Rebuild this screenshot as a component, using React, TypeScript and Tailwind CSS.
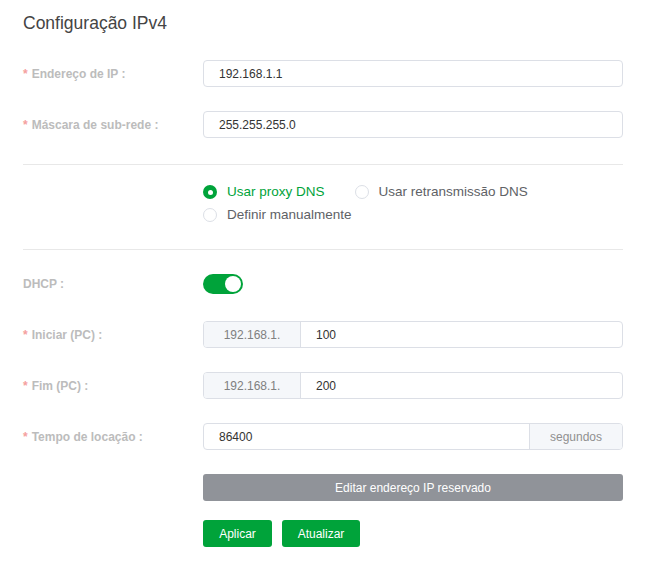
import React, { useState } from 'react';

const font = { fontFamily: '"Liberation Sans", Arial, sans-serif' };

const Label = ({ text, required = true }: { text: string; required?: boolean }) => (
  <div className="w-[180px] shrink-0 text-[12px] font-semibold text-[#bcbcbc]">
    {required && <span className="text-[#f5a0a0] mr-1">*</span>}
    {text}
  </div>
);

const Radio = ({ label, checked, onClick }: { label: string; checked: boolean; onClick: () => void }) => (
  <button type="button" onClick={onClick} className="flex items-center gap-[10px] text-[13.5px]">
    <span
      className={
        checked
          ? 'w-[14px] h-[14px] rounded-full bg-[#00a33a] flex items-center justify-center'
          : 'w-[14px] h-[14px] rounded-full border border-[#dcdfe6] bg-white'
      }
    >
      {checked && <span className="w-[5px] h-[5px] rounded-full bg-white" />}
    </span>
    <span className={checked ? 'text-[#00a33a]' : 'text-[#606266]'}>{label}</span>
  </button>
);

export default function App() {
  const [dns, setDns] = useState('proxy');
  const [dhcp, setDhcp] = useState(true);

  return (
    <div className="w-[664px] h-[576px] bg-white px-[23px] pt-[11px]" style={font}>
      <h1 className="text-[17.5px] leading-[24px] text-[#444]">Configuração IPv4</h1>

      <div className="flex items-center mt-[25px]">
        <Label text="Endereço de IP :" />
        <div className="w-[420px] h-[27px] border border-[#dcdfe6] rounded-[4px] px-[15px] flex items-center text-[12px] text-[#333]">
          192.168.1.1
        </div>
      </div>

      <div className="flex items-center mt-[24px]">
        <Label text="Máscara de sub-rede :" />
        <div className="w-[420px] h-[27px] border border-[#dcdfe6] rounded-[4px] px-[15px] flex items-center text-[12px] text-[#333]">
          255.255.255.0
        </div>
      </div>

      <div className="border-t border-[#e8e8e8] mt-[26px] w-[600px]" />

      <div className="pl-[180px] pt-[19px] pb-[25px]">
        <div className="flex items-center gap-[30px] h-[16px]">
          <Radio label="Usar proxy DNS" checked={dns === 'proxy'} onClick={() => setDns('proxy')} />
          <Radio label="Usar retransmissão DNS" checked={dns === 'relay'} onClick={() => setDns('relay')} />
        </div>
        <div className="flex items-center mt-[6px] h-[18px]">
          <Radio label="Definir manualmente" checked={dns === 'manual'} onClick={() => setDns('manual')} />
        </div>
      </div>

      <div className="border-t border-[#e8e8e8] w-[600px]" />

      <div className="flex items-center mt-[24px]">
        <Label text="DHCP :" required={false} />
        <button
          type="button"
          onClick={() => setDhcp(!dhcp)}
          className={
            dhcp
              ? 'w-[40px] h-[20px] rounded-full bg-[#00a33a] flex items-center justify-end px-[2px]'
              : 'w-[40px] h-[20px] rounded-full bg-[#dcdfe6] flex items-center justify-start px-[2px]'
          }
        >
          <span className="w-[16px] h-[16px] rounded-full bg-white" />
        </button>
      </div>

      <div className="flex items-center mt-[27px]">
        <Label text="Iniciar (PC) :" />
        <div className="w-[420px] h-[27px] border border-[#dcdfe6] rounded-[4px] flex overflow-hidden text-[12px]">
          <div className="w-[97px] bg-[#f5f7fa] border-r border-[#dcdfe6] flex items-center justify-center text-[#808080]">192.168.1.</div>
          <div className="flex-1 flex items-center px-[15px] text-[#333]">100</div>
        </div>
      </div>

      <div className="flex items-center mt-[24px]">
        <Label text="Fim (PC) :" />
        <div className="w-[420px] h-[27px] border border-[#dcdfe6] rounded-[4px] flex overflow-hidden text-[12px]">
          <div className="w-[97px] bg-[#f5f7fa] border-r border-[#dcdfe6] flex items-center justify-center text-[#808080]">192.168.1.</div>
          <div className="flex-1 flex items-center px-[15px] text-[#333]">200</div>
        </div>
      </div>

      <div className="flex items-center mt-[24px]">
        <Label text="Tempo de locação :" />
        <div className="w-[420px] h-[27px] border border-[#dcdfe6] rounded-[4px] flex overflow-hidden text-[12px]">
          <div className="flex-1 flex items-center px-[15px] text-[#333]">86400</div>
          <div className="w-[93px] bg-[#f5f7fa] border-l border-[#dcdfe6] flex items-center justify-center text-[#909090]">segundos</div>
        </div>
      </div>

      <div className="pl-[180px] mt-[24px]">
        <button type="button" className="w-[420px] h-[27px] rounded-[3px] bg-[#909399] text-white text-[12px]">
          Editar endereço IP reservado
        </button>
        <div className="flex gap-[10px] mt-[19px]">
          <button type="button" className="w-[69px] h-[27px] rounded-[3px] bg-[#00a33a] text-white text-[12px]">Aplicar</button>
          <button type="button" className="w-[78px] h-[27px] rounded-[3px] bg-[#00a33a] text-white text-[12px]">Atualizar</button>
        </div>
      </div>
    </div>
  );
}
